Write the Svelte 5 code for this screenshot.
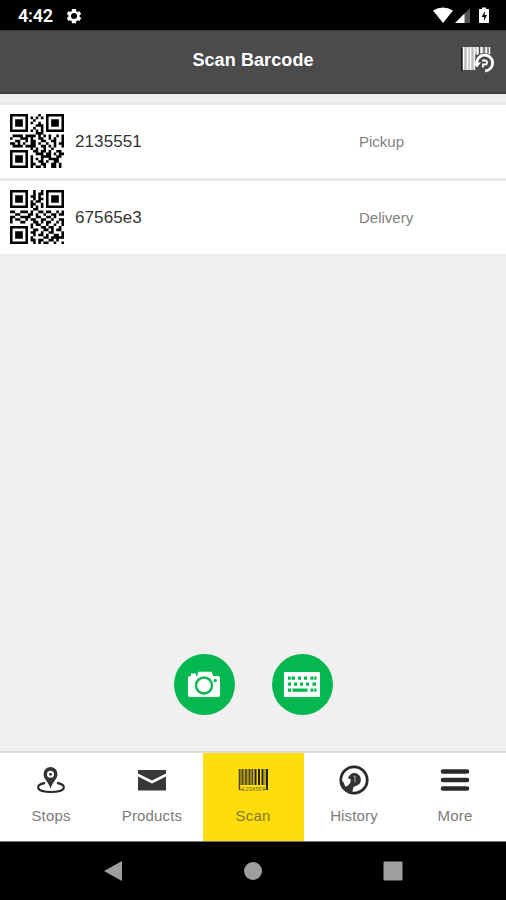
<script lang="ts">
	type Item = { code: string; kind: string; qr: string[] };

	// One string per QR row, '#' is a dark module
	const items: Item[] = [
		{
			code: '2135551',
			kind: 'Pickup',
			qr: [
				'#######....#..#######',
				'#.....#.#.#.#.#.....#',
				'#.###.#..#....#.###.#',
				'#.###.#.#..#..#.###.#',
				'#.###.#...###.#.###.#',
				'#.....#..#..#.#.....#',
				'#######.#.#.#.#######',
				'..........###........',
				'.####.####.#.#.#..#.#',
				'#...###.#..##..#.#..#',
				'..##..#.##..##..##..#',
				'##.#.#..##.#..#..#.##',
				'.####.####..##.#.#..#',
				'........#.#..#..#....',
				'#######..##.##.#..##.',
				'#.....#...###.##.#.##',
				'#.###.#.#...####..##.',
				'#.###.#.#.#.#..####..',
				'#.###.#.#..##.#..##..',
				'#.....#.##..##..##.#.',
				'#######.#.##.#..##.#.'
			]
		},
		{
			code: '67565e3',
			kind: 'Delivery',
			qr: [
				'#######..#..#.#######',
				'#.....#..#.##.#.....#',
				'#.###.#.##.#..#.###.#',
				'#.###.#..#.##.#.###.#',
				'#.###.#.#.##..#.###.#',
				'#.....#.##..#.#.....#',
				'#######.#.#.#.#######',
				'.........##..........',
				'##..###.#..##.##..#.#',
				'..##...##.#..#..##.##',
				'##..####..##..##.#...',
				'#.##..#.##..##..#..##',
				'#...##...##.#.##..#.#',
				'........#.##..#..#..#',
				'#######.#...##.##..#.',
				'#.....#..##..##.#.##.',
				'#.###.#.##..#..##...#',
				'#.###.#..#.##.#..##.#',
				'#.###.#.#....##.#####',
				'#.....#.##.##..##.#..',
				'#######..#.#.##..#..#'
			]
		}
	];

	const tabs = ['Stops', 'Products', 'Scan', 'History', 'More'];
	let active = $state('Scan');

	function qrPath(rows: string[]) {
		let d = '';
		rows.forEach((row, y) => {
			for (const run of row.matchAll(/#+/g)) {
				const w = run[0].length;
				d += `M${run.index} ${y}h${w}v1h-${w}z`;
			}
		});
		return d;
	}
</script>

<div class="screen">
	<div class="status">
		<span class="time">4:42</span>
		<svg class="gear" width="18" height="18" viewBox="0 0 24 24">
			<path
				fill="#fff"
				fill-rule="evenodd"
				d="M19.4 13a7.500 7.500 0 0 0 0-2l2.200-1.700-2.200-3.800-2.600 1a7.500 7.500 0 0 0-1.700-1L14.700 2.500H9.300l-.4 3a7.500 7.500 0 0 0-1.700 1l-2.600-1-2.200 3.800L4.600 11a7.500 7.500 0 0 0 0 2l-2.200 1.700 2.200 3.800 2.600-1a7.500 7.500 0 0 0 1.700 1l.4 3h5.400l.4-3a7.500 7.500 0 0 0 1.700-1l2.600 1 2.200-3.800zM12 16a4 4 0 1 1 0-8 4 4 0 0 1 0 8z"
			/>
		</svg>
		<svg class="signals" width="58" height="18" viewBox="0 0 58 18">
			<path fill="#fff" d="M0 3.500Q10 -2.500 20 3.500L10 16z" />
			<path fill="#555" d="M31 7V16h6V1z" />
			<path fill="#fff" d="M22 16L31.500 6.500V16z" />
			<path fill="#fff" d="M49 .5h4V2h3v14H46V2h3z" />
			<path fill="#111" d="M52 4l-3.500 6H51v4l3-6h-2.300z" />
		</svg>
	</div>

	<header>
		<h1>Scan Barcode</h1>
		<button class="rescan" aria-label="Rescan">
			<svg width="34" height="28" viewBox="0 0 34 28">
				<path fill="#151515" d="M0 2h1.500v23H0z" />
				<path fill="#bdbdbd" d="M2 1h11v23H2zM13 1h16v7H13z" />
				<path
					stroke="#fff"
					stroke-width="1.500"
					d="M2.500 1v23M6.500 1v23M9.500 1v23M13.500 1v23M16.500 1v8M20.500 1v7M25.500 1v6M28.500 1v7"
				/>
				<path stroke="#4b4b4b" d="M18.500 1v7M23 1v6M27 1v6" />
				<circle cx="23.500" cy="16.500" r="9.800" fill="#4b4b4b" />
				<path fill="none" stroke="#fff" stroke-width="2.800" d="M15.700 18a8 8 0 1 1 8.500 7" />
				<path fill="#fff" d="M12 16.500h8l-4 5z" />
				<path fill="none" stroke="#fff" stroke-width="1.800" d="M21 14.500h3a2 2 0 0 1 0 4h-2v3" />
			</svg>
		</button>
	</header>

	<main>
		<ul>
			{#each items as item}
				<li>
					<svg class="qr" width="54" height="54" viewBox="0 0 21 21">
						<path d={qrPath(item.qr)} />
					</svg>
					<span class="code">{item.code}</span>
					<span class="kind">{item.kind}</span>
				</li>
			{/each}
		</ul>

		<div class="actions">
			<button aria-label="Camera">
				<svg width="32" height="27" viewBox="0 0 32 27">
					<path
						fill="#fff"
						d="M2 5h1V2.500h5V5h1l1.500-4.200h13L25 5h5a2 2 0 0 1 2 2v17a2 2 0 0 1-2 2H2a2 2 0 0 1-2-2V7a2 2 0 0 1 2-2z"
					/>
					<circle cx="16" cy="14.500" r="8" fill="none" stroke="#04b84f" stroke-width="2.400" />
					<circle cx="27.200" cy="9.500" r="1.700" fill="#04b84f" />
				</svg>
			</button>
			<button aria-label="Keyboard">
				<svg width="36" height="25" viewBox="0 0 36 25">
					<rect width="36" height="25" rx="1" fill="#fff" />
					<path
						fill="#04b84f"
						d="M4 4.500h7v3.200H4zM14 4.500h3v3.200h-3zM20 4.500h3v3.200h-3zM26.500 4.500h6v3.200h-6zM4 10.500h3v3.200H4zM10 10.500h3v3.200h-3zM16 10.500h3v3.200h-3zM22 10.500h3v3.200h-3zM28.500 10.500h3.500v3.200h-3.500zM4 16.500h3v3.200H4zM8.500 16.500h15v3.200h-15zM26.500 16.500h6v3.200h-6z"
					/>
					<path stroke="#fff" stroke-width=".8" d="M7.200 4v4M29.800 4v4M29.800 16v4" />
				</svg>
			</button>
		</div>
	</main>

	<nav>
		{#each tabs as tab}
			<button class:active={tab === active} onclick={() => (active = tab)}>
				<svg width="32" height="32" viewBox="0 0 32 32">
					{#if tab === 'Stops'}
						<path
							fill="none"
							stroke="#292929"
							stroke-width="2.200"
							d="M10 18.800C-1 21 1 28 16 28s17-7 6-9.200"
						/>
						<path
							fill="#333"
							fill-rule="evenodd"
							d="M15.500 3a7 7 0 0 0-7 7c0 5 5 8 7 14.500 2-6.500 7-9.500 7-14.500a7 7 0 0 0-7-7zm0 3.800a3.500 3.500 0 1 1 0 7 3.500 3.500 0 0 1 0-7z"
						/>
						<circle cx="15.500" cy="10.300" r="1.400" fill="#333" />
					{:else if tab === 'Products'}
						<path fill="#383838" d="M2 6h28v3.500l-14 7-14-7zM2 12.500l14 7 14-7V26.500H2z" />
					{:else if tab === 'Scan'}
						<path fill="#b09a1e" d="M3 5h13v16H3z" />
						<path
							stroke="#4c4310"
							stroke-width="1.500"
							d="M2.500 5v21M5.500 5v16M9 5v16M12.500 5v16M15.500 5v16"
						/>
						<path
							stroke="#262000"
							stroke-width="2"
							d="M18.500 5v16M22 5v16M25.500 5v16M30 5v21"
						/>
						<path stroke="#75671a" d="M28 5v16M3 25.500h3M26 25.500h4" />
						<text x="16.500" y="27" text-anchor="middle" class="digits">1234567</text>
					{:else if tab === 'History'}
						<circle cx="16" cy="16" r="13.200" fill="none" stroke="#292929" stroke-width="2.800" />
						<path
							fill="#333"
							d="M10 14.500a6.500 6.500 0 1 1 7.500 7.500l-2 1-1.500 6C10.500 29 7 27 5.500 23.500L10 21.500l2.500-3V15z"
						/>
						<path fill="#333" d="M2.500 16.500l3 1.500 2 5-3 1z" />
						<path fill="none" stroke="#999" stroke-width="1.300" d="M15.500 12.500h1.500v6" />
					{:else}
						<path
							stroke="#292929"
							stroke-width="4.600"
							stroke-linecap="round"
							d="M4 7.500h24M4 16h24M4 24.500h24"
						/>
					{/if}
				</svg>
				<span>{tab}</span>
			</button>
		{/each}
	</nav>

	<div class="system">
		<svg width="20" height="20" viewBox="0 0 20 20"><path d="M1 10L19 0v20z" /></svg>
		<svg width="20" height="20" viewBox="0 0 20 20"><circle cx="10" cy="10" r="9" /></svg>
		<svg width="20" height="20" viewBox="0 0 20 20">
			<rect x=".5" y=".5" width="19" height="19" rx="1" />
		</svg>
	</div>
</div>

<style>
	:global(body) {
		margin: 0;
	}

	.screen {
		width: 506px;
		height: 900px;
		display: flex;
		flex-direction: column;
		background: #f0f0f0;
		font-family: 'Liberation Sans', Arial, sans-serif;
		overflow: hidden;
	}

	button {
		border: 0;
		padding: 0;
		font: inherit;
		cursor: pointer;
	}

	svg {
		display: block;
	}

	.status {
		height: 30px;
		box-sizing: border-box;
		padding: 1px 15px 0 18px;
		display: flex;
		align-items: center;
		background: #000;
	}

	.time {
		color: #fff;
		font: 600 18px Roboto, sans-serif;
		letter-spacing: -0.2px;
	}

	.gear {
		margin-left: 12px;
	}

	.signals {
		margin-left: auto;
	}

	header {
		height: 64px;
		box-sizing: border-box;
		padding: 0 11px 4px;
		display: grid;
		grid-template-columns: 34px 1fr 34px;
		align-items: center;
		background: #4b4b4b;
		border-top: 1px solid #3a3a3a;
		border-bottom: 2px solid #3d3d3d;
	}

	h1 {
		grid-column: 2;
		margin: 0;
		color: #fff;
		font-size: 18px;
		line-height: 22px;
		letter-spacing: 0.1px;
		text-align: center;
	}

	.rescan {
		background: none;
	}

	main {
		flex: 1;
		display: flex;
		flex-direction: column;
		justify-content: space-between;
	}

	ul {
		list-style: none;
		margin: 0;
		padding: 8px 0 0;
	}

	li {
		height: 73px;
		padding-left: 10px;
		display: grid;
		grid-template-columns: 65px 284px 1fr;
		align-items: center;
		background: #fff;
		border-top: 3px solid #ebebeb;
	}

	li:last-child {
		border-bottom: 3px solid #ebebeb;
	}

	.qr {
		margin-bottom: 2px;
	}

	.code {
		padding-top: 1px;
		color: #333;
		font-size: 17px;
		letter-spacing: 0.1px;
	}

	.kind {
		color: #808080;
		font-size: 15px;
	}

	.actions {
		display: flex;
		justify-content: center;
		gap: 37px;
		padding-bottom: 36px;
	}

	.actions button {
		width: 61px;
		height: 61px;
		border-radius: 50%;
		display: grid;
		place-items: center;
		background: #04b84f;
	}

	nav {
		height: 88px;
		padding-left: 1px;
		display: grid;
		grid-template-columns: repeat(5, 1fr);
		background: #fff;
		border-top: 2px solid #dcdcdc;
		border-bottom: 1px solid #777;
	}

	nav button {
		padding: 11px 1px 0 0;
		display: flex;
		flex-direction: column;
		align-items: center;
		gap: 11px;
		background: none;
		color: #7b7b7b;
		font-size: 15px;
		line-height: 18px;
		letter-spacing: 0.15px;
	}

	nav .active {
		background: #fddd0b;
		color: #877a2d;
	}

	.digits {
		fill: #75671a;
		font-size: 6px;
		letter-spacing: 0;
	}

	.system {
		height: 58px;
		display: flex;
		align-items: center;
		justify-content: center;
		gap: 120px;
		background: #000;
		fill: #9e9e9e;
	}
</style>
